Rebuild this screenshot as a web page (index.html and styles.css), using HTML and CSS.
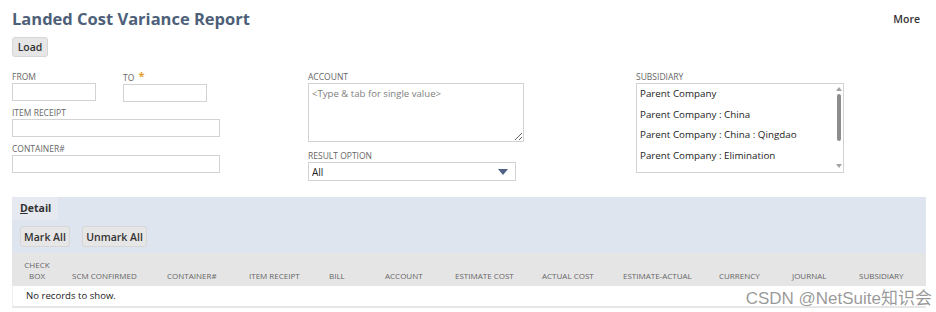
FILE: index.html
```html
<!DOCTYPE html>
<html lang="en">

<head>
    <meta charset="UTF-8">
    <title>Landed Cost Variance Report</title>
    <link rel="stylesheet" href="styles.css">
</head>

<body>
    <div class="page">
        <div class="page-head">
            <h1 class="page-title">Landed Cost Variance Report</h1>
            <a class="more-link">More</a>
        </div>
        <div class="actions">
            <button class="btn btn-load">Load</button>
        </div>

        <div class="form">
            <div class="form-col col-one">
                <div class="pair">
                    <div class="field short">
                        <label class="field-label">FROM</label>
                        <input class="text-input" type="text">
                    </div>
                    <div class="field short">
                        <label class="field-label">TO <span class="req">*</span></label>
                        <input class="text-input" type="text">
                    </div>
                </div>
                <div class="field">
                    <label class="field-label">ITEM RECEIPT</label>
                    <input class="text-input" type="text">
                </div>
                <div class="field">
                    <label class="field-label">CONTAINER#</label>
                    <input class="text-input" type="text">
                </div>
            </div>

            <div class="form-col col-two">
                <div class="field">
                    <label class="field-label">ACCOUNT</label>
                    <textarea class="area-input" placeholder="<Type & tab for single value>"></textarea>
                </div>
                <div class="field">
                    <label class="field-label">RESULT OPTION</label>
                    <div class="select-wrap">
                        <select class="select-input">
                            <option>All</option>
                        </select>
                        <svg class="select-arrow" width="10" height="6" viewBox="0 0 10 6">
                            <path d="M0 0 H10 L5 6 Z" fill="#4d6285" />
                        </svg>
                    </div>
                </div>
            </div>

            <div class="form-col col-three">
                <div class="field">
                    <label class="field-label">SUBSIDIARY</label>
                    <div class="listbox">
                        <ul class="list-items">
                            <li>Parent Company</li>
                            <li>Parent Company : China</li>
                            <li>Parent Company : China : Qingdao</li>
                            <li>Parent Company : Elimination</li>
                        </ul>
                        <div class="scroll">
                            <svg width="6" height="4" viewBox="0 0 6 4"><path d="M0 4 H6 L3 0 Z" fill="#a3a3a3" /></svg>
                            <div class="scroll-thumb"></div>
                            <svg class="scroll-down" width="6" height="4" viewBox="0 0 6 4"><path d="M0 0 H6 L3 4 Z" fill="#a3a3a3" /></svg>
                        </div>
                    </div>
                </div>
            </div>
        </div>

        <div class="detail">
            <div class="detail-bar">
                <div class="tab"><span class="tab-key">D</span>etail</div>
                <div class="tab-buttons">
                    <button class="btn btn-mark">Mark All</button>
                    <button class="btn btn-unmark">Unmark All</button>
                </div>
            </div>
            <div class="grid grid-head">
                <div class="cell center">CHECK<br>BOX</div>
                <div class="cell">SCM CONFIRMED</div>
                <div class="cell">CONTAINER#</div>
                <div class="cell">ITEM RECEIPT</div>
                <div class="cell">BILL</div>
                <div class="cell">ACCOUNT</div>
                <div class="cell">ESTIMATE COST</div>
                <div class="cell">ACTUAL COST</div>
                <div class="cell">ESTIMATE-ACTUAL</div>
                <div class="cell">CURRENCY</div>
                <div class="cell">JOURNAL</div>
                <div class="cell">SUBSIDIARY</div>
            </div>
            <div class="empty-row">No records to show.</div>
        </div>

        <div class="watermark">CSDN @NetSuite知识会</div>
    </div>
</body>

</html>
```

FILE: styles.css
```css
* {
    padding: 0;
    margin: 0;
    box-sizing: border-box;
}

body {
    background: #fff;
    font-family: "Open Sans", "Liberation Sans", sans-serif;
    color: #333;
}

.page {
    position: relative;
    width: 936px;
    height: 312px;
    padding: 7px 10px 0 12px;
    overflow: hidden;
}

.page-head {
    display: flex;
    justify-content: space-between;
    align-items: center;
    height: 24px;
}

.page-title {
    font-size: 16.5px;
    font-weight: 700;
    color: #4d5f79;
    line-height: 24px;
}

.more-link {
    font-size: 10.5px;
    font-weight: 600;
    color: #333;
    margin-right: 6px;
}

.actions {
    display: flex;
    margin-top: 6px;
}

.btn {
    font-family: "Open Sans", "Liberation Sans", sans-serif;
    font-size: 10.5px;
    font-weight: 600;
    color: #333;
    background: #e6e6e6;
    border: 1px solid #d6d6d6;
    border-radius: 3px;
    height: 20px;
    padding: 0;
    text-align: center;
}

.btn-load {
    width: 36px;
}

/* form area */
.form {
    display: flex;
    margin-top: 14px;
}

.form-col {
    display: flex;
    flex-direction: column;
}

.col-one {
    width: 296px;
}

.col-two {
    width: 328px;
}

.col-three {
    width: 207px;
}

.pair {
    display: flex;
    gap: 27px;
}

.field {
    display: flex;
    flex-direction: column;
    margin-bottom: 6px;
}

.col-two .field {
    margin-bottom: 8px;
}

.form-col .field:last-child {
    margin-bottom: 0;
}

.field-label {
    font-size: 8.5px;
    line-height: 11px;
    color: #666;
    margin-bottom: 1px;
    white-space: nowrap;
}

.req {
    color: #e3a02f;
    font-weight: 700;
    font-size: 11px;
    line-height: 11px;
    position: relative;
    top: -1px;
    margin-left: 2px;
}

.text-input {
    width: 208px;
    height: 18px;
    border: 1px solid #d3d3d3;
    background: #fff;
}

.short .text-input {
    width: 84px;
}

.area-input {
    width: 216px;
    height: 59px;
    border: 1px solid #d3d3d3;
    font-family: "Open Sans", "Liberation Sans", sans-serif;
    font-size: 9.6px;
    padding: 3px 3px;
    resize: vertical;
}

.area-input::placeholder {
    color: #808080;
}

.select-wrap {
    position: relative;
    width: 208px;
    height: 19px;
}

.select-input {
    display: block;
    appearance: none;
    -webkit-appearance: none;
    width: 208px;
    height: 19px;
    border: 1px solid #d3d3d3;
    background: #fff;
    font-family: "Open Sans", "Liberation Sans", sans-serif;
    font-size: 10px;
    color: #222;
    padding: 0 3px;
}

.select-arrow {
    position: absolute;
    right: 8px;
    top: 7px;
}

.listbox {
    display: flex;
    width: 208px;
    height: 90px;
    border: 1px solid #d3d3d3;
}

.list-items {
    list-style: none;
    flex: 1;
    padding: 0 0 0 3px;
}

.list-items li {
    font-size: 9.8px;
    line-height: 20.7px;
    color: #222;
    white-space: nowrap;
}

.scroll {
    width: 9px;
    display: flex;
    flex-direction: column;
    align-items: center;
    padding: 3px 0 4px;
}

.scroll-thumb {
    width: 4px;
    height: 47px;
    margin-top: 3px;
    background: #8c8c8c;
    border-radius: 2px;
}

.scroll-down {
    margin-top: auto;
}

/* detail sublist */
.detail {
    margin-top: 16px;
    width: 914px;
}

.detail-bar {
    background: #dfe5ee;
    height: 56px;
}

.tab {
    width: 46px;
    height: 23px;
    background: #e6eaf0;
    font-size: 10.5px;
    font-weight: 700;
    color: #333;
    line-height: 23px;
    padding-left: 8px;
}

.tab-key {
    text-decoration: underline;
}

.tab-buttons {
    display: flex;
    gap: 12px;
    padding: 6px 0 0 8px;
}

.btn-mark,
.btn-unmark {
    height: 21px;
}

.btn-mark {
    width: 50px;
}

.btn-unmark {
    width: 65px;
}

.grid {
    display: grid;
    grid-template-columns: 50px 95px 82px 80px 56px 70px 87px 81px 96px 73px 67px 1fr;
}

.grid-head {
    background: #e5e5e5;
    height: 33px;
    align-items: end;
    padding-bottom: 5px;
}

.cell {
    font-size: 8px;
    line-height: 11px;
    color: #666;
    padding-left: 10px;
    white-space: nowrap;
}

.cell.center {
    text-align: center;
    padding-left: 0;
}

.empty-row {
    height: 22px;
    font-size: 9.6px;
    line-height: 19px;
    color: #222;
    padding-left: 13px;
    border-bottom: 2px solid #e6e6e6;
    border-left: 1px solid #eee;
}

.watermark {
    position: absolute;
    right: 4px;
    top: 284px;
    font-family: "Liberation Sans", "Noto Sans CJK SC", sans-serif;
    font-size: 17px;
    color: rgba(120, 120, 120, 0.75);
    white-space: nowrap;
}
```
